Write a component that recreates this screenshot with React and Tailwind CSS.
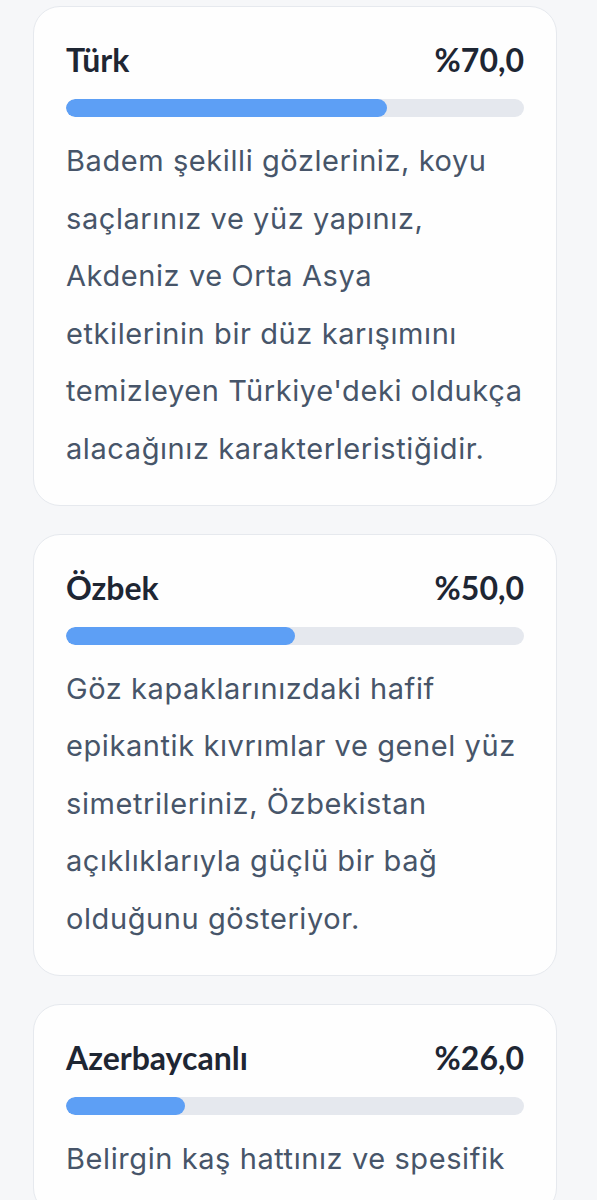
import React from "react";

const items = [
  {
    name: "Türk",
    pct: "%70,0",
    value: 70,
    lines: [
      "Badem şekilli gözleriniz, koyu",
      "saçlarınız ve yüz yapınız,",
      "Akdeniz ve Orta Asya",
      "etkilerinin bir düz karışımını",
      "temizleyen Türkiye'deki oldukça",
      "alacağınız karakterleristiğidir.",
    ],
  },
  {
    name: "Özbek",
    pct: "%50,0",
    value: 50,
    lines: [
      "Göz kapaklarınızdaki hafif",
      "epikantik kıvrımlar ve genel yüz",
      "simetrileriniz, Özbekistan",
      "açıklıklarıyla güçlü bir bağ",
      "olduğunu gösteriyor.",
    ],
  },
  {
    name: "Azerbaycanlı",
    pct: "%26,0",
    value: 26,
    lines: ["Belirgin kaş hattınız ve spesifik"],
  },
];

function Card({ item }) {
  return (
    <div className="rounded-[27px] border border-[#e6e9ee] bg-[#fefefe] px-[32px] pt-[31px] pb-[27px]">
      <div
        className="flex items-center justify-between text-[32px] leading-[44px] font-bold text-[#1e2633]"
        style={{ fontFamily: "Lato, sans-serif" }}
      >
        <span>{item.name}</span>
        <span>{item.pct}</span>
      </div>
      <div className="mt-[17px] h-[18px] w-full rounded-full bg-[#e5e8ee] overflow-hidden">
        <div
          className="h-full rounded-full bg-[#5d9ff5]"
          style={{ width: `${item.value}%` }}
        />
      </div>
      <div
        className="mt-[15px] text-[29px] leading-[57.6px] text-[#475569] tracking-[0.02em]"
        style={{ fontFamily: "Inter, Lato, sans-serif" }}
      >
        {item.lines.map((l, i) => (
          <div key={i} className="whitespace-nowrap">
            {l}
          </div>
        ))}
      </div>
    </div>
  );
}

export default function App() {
  return (
    <div
      className="min-h-[1200px] bg-[#f6f7f9] pt-[6px] pl-[33px] pr-[40px] pb-10"
      style={{ fontFamily: "Lato, 'Noto Sans', sans-serif" }}
    >
      <div className="flex flex-col gap-[28px]">
        {items.map((it) => (
          <Card key={it.name} item={it} />
        ))}
      </div>
    </div>
  );
}
